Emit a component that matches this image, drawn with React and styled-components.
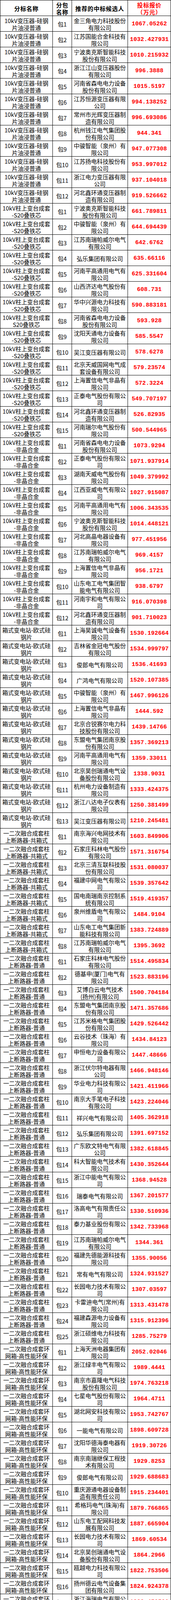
import React from 'react';
import styled, { createGlobalStyle } from 'styled-components';

const GlobalStyle = createGlobalStyle`
  html, body { margin: 0; padding: 0; background: #ffffff; }
  body { font-family: "Noto Sans CJK SC", "Noto Sans", sans-serif; color: #000; }
`;

const Table = styled.div`
  width: 437px;
  box-sizing: border-box;
  border-top: 1px solid #000;
  border-left: 1px solid #000;
`;

const Row = styled.div`
  display: grid;
  grid-template-columns: 134px 49px 143px 110px;
`;

const Cell = styled.div`
  box-sizing: border-box;
  height: 40px;
  border-right: 1px solid #000;
  border-bottom: 1px solid #000;
  display: flex;
  align-items: center;
  justify-content: center;
  text-align: center;
  padding: 3px 3px 0;
  font-size: 14.8px;
  line-height: 17.6px;
  color: ${(p) => (p.$red ? '#ff0000' : '#000')};
  font-weight: ${(p) => (p.$bold ? 700 : 400)};
  letter-spacing: ${(p) => (p.$bold ? '0.8px' : '0')};
  white-space: ${(p) => (p.$nowrap ? 'nowrap' : 'normal')};
  overflow: hidden;
`;

const Price = styled(Cell)`
  font-family: "Liberation Mono", "DejaVu Sans Mono", monospace;
  font-size: 15px;
  font-weight: 700;
  color: #ff0000;
  padding: 3px 0 0;
  letter-spacing: 0;
`;

const Lines = styled.span`
  display: block;
`;

const sections = [
  {
    name: ['10kV变压器-硅钢', '片油浸普通'],
    items: [
      ['金三角电力科技股份有限公司', '1067.05262'],
      ['江苏国能合金科技有限公司', '1032.427931'],
      ['宁波奥克斯智能科技股份有限公司', '1010.215932'],
      ['浙江江山变压器股份有限公司', '996.3888'],
      ['河南省森电电力设备股份有限公司', '1015.5197'],
      ['江苏恒源变压器有限公司', '994.138252'],
      ['常州市光辉变压器制造有限公司', '996.693086'],
      ['杭州钱江电气集团股份有限公司', '944.341'],
      ['中骏智能（泉州）有限公司', '947.077308'],
      ['江苏扬电科技股份有限公司', '953.997012'],
      ['浙江电力变压器有限公司', '937.104018'],
      ['河北鑫环通变压器制造有限公司', '919.526662'],
    ],
  },
  {
    name: ['10kV柱上变台成套', '-S20叠铁芯'],
    items: [
      ['宁波奥克斯智能科技股份有限公司', '661.789811'],
      ['中骏智能（泉州）有限公司', '644.694439'],
      ['江苏南瑞帕威尔电气有限公司', '642.6762'],
      ['弘乐集团有限公司', '635.66116'],
      ['河南平高通用电气有限公司', '625.331604'],
      ['山西济达电气股份有限公司', '608.731'],
      ['华中兴源电力科技有限公司', '590.883181'],
      ['河南省森电电力设备股份有限公司', '593.928', ['10kV柱上变台成套', 'S20叠铁芯']],
      ['沈阳天通电力设备有限公司', '585.5547'],
      ['吴江变压器有限公司', '578.6278'],
      ['北京天威国网电气成套设备有限公司', '579.23574'],
      ['上海置信电气非晶有限公司', '572.3224'],
      ['正泰电气股份有限公司', '549.707197'],
      ['河北鑫环通变压器制造有限公司', '526.82935'],
      ['河南瑞尔电气股份有限公司', '500.544965'],
    ],
  },
  {
    name: ['10kV柱上变台成套', '-非晶合金'],
    items: [
      ['河南省森电电力设备股份有限公司', '1073.9294'],
      ['正泰电气股份有限公司', '1071.937914'],
      ['湖南天威电气股份有限公司', '1049.379992'],
      ['江西亚威电气有限公司', '1027.915087'],
      ['河南平高通用电气有限公司', '1006.343535'],
      ['宁波奥克斯智能科技股份有限公司', '1014.448121'],
      ['河北高晶电器设备有限公司', '977.451956'],
      ['江苏南瑞帕威尔电气有限公司', '969.4157'],
      ['上海置信电气非晶有限公司', '956.1721'],
      ['山东电工电气集团智能电气有限公司', '938.6797'],
      ['河南宇和电气有限公司', '916.070398'],
      ['河北鑫环通变压器制造有限公司', '901.710023'],
    ],
  },
  {
    name: ['箱式变电站-欧式硅', '钢片'],
    items: [
      ['上海昊诚电气设备有限公司', '1530.192664'],
      ['吉林省金冠电气股份有限公司', '1534.999797'],
      ['俊郎电气有限公司', '1536.41693'],
      ['广鸿电气有限公司', '1520.107385'],
      ['中骏智能（泉州）有限公司', '1467.996126'],
      ['上海置信电气非晶有限公司', '1444.592'],
      ['北京合锐赛尔电力科技股份有限公司', '1439.14766'],
      ['东盟电气集团南京股份有限公司', '1357.369213'],
      ['河南平高通用电气有限公司', '1359.33011'],
      ['北京昊创瑞通电气设备股份有限公司', '1338.9031'],
      ['杭州电力设备制造有限公司', '1333.424375'],
      ['浙江八达电子仪表有限公司', '1250.381499'],
      ['吴江变压器有限公司', '1210.245481'],
    ],
  },
  {
    name: ['一二次融合成套柱', '上断路器-共箱式'],
    items: [
      ['南京海兴电网技术有限公司', '1603.849906'],
      ['石家庄科林电气股份有限公司', '1571.316754'],
      ['北京三清互联科技股份有限公司', '1531.080037'],
      ['福建中网电气有限公司', '1539.357642'],
      ['国电南瑞南京控制系统有限公司', '1519.419357'],
      ['泉州维盾电气有限公司', '1484.9104'],
      ['山东电工电气集团新能科技有限公司', '1383.724889'],
      ['江苏南瑞帕威尔电气有限公司', '1395.3692'],
    ],
  },
  {
    name: ['一二次融合成套柱', '上断路器-普通'],
    items: [
      ['石家庄科林电气股份有限公司', '1514.495834'],
      ['德基申(厦门)电气有限公司', '1523.883196'],
      ['艾博白云电气技术(扬州)有限公司', '1500.704184'],
      ['东盟电气集团南京股份有限公司', '1471.357686'],
      ['江苏米格电气集团股份有限公司', '1429.526442'],
      ['云谷技术（珠海）有限公司', '1434.84123'],
      ['申恒电力设备有限公司', '1447.48666'],
      ['浙江伏尔特电器有限公司', '1466.948146'],
      ['华业电力科技有限公司', '1421.411966'],
      ['南京大手笔电子科技有限公司', '1423.224046'],
      ['祥兴电气有限公司', '1405.362918'],
      ['弘乐集团有限公司', '1391.697152'],
      ['广东欧文特电气有限公司', '1382.618845'],
      ['科大智能电气技术有限公司', '1430.352644'],
      ['浙江中能电气有限公司', '1368.94528'],
      ['瑞泰电气有限公司', '1367.201577'],
      ['洛高电气有限责任公司', '1330.510936'],
      ['泰力基业股份有限公司', '1342.733968'],
      ['江苏南瑞帕威尔电气有限公司', '1344.361'],
      ['福建先德能源科技有限公司', '1355.90056'],
      ['常有电气有限公司', '1324.931527'],
      ['长园电力技术有限公司', '1307.03597'],
      ['卡雷迪电气(常州)有限公司', '1313.431478'],
      ['福建森源电力设备有限公司', '1315.912396'],
      ['浙江硕维电力科技有限公司', '1285.75279'],
    ],
  },
  {
    name: ['一二次融合成套环', '网箱-高性能环保'],
    items: [
      ['上海天洲电器集团有限公司', '2052.02046'],
      ['浙江绿丰电气有限公司', '1989.4441'],
      ['南京市嘉隆电气科技股份有限公司', '1974.763218'],
      ['七星电气股份有限公司', '1964.4711'],
      ['湖北网安科技有限公司', '1953.742767'],
      ['一能电气有限公司', '1898.609728'],
      ['沈阳华德海泰电器有限公司', '1919.30726'],
      ['南京南瑞继保工程技术有限公司', '1929.8253'],
      ['俊郎电气有限公司', '1929.688683'],
      ['重庆源通电器设备制造有限责任公司', '1915.234401'],
      ['希格玛电气(珠海)有限公司', '1879.766865'],
      ['山东电工配网科技发展有限公司', '1887.665904'],
      ['长园电力技术有限公司', '1869.60534'],
      ['北京昊创瑞通电气设备股份有限公司', '1864.2966'],
      ['瓯越电力科技有限公司', '1822.753506'],
      ['扬州德云电气设备集团有限公司', '1824.924378'],
      ['浙江海瑞电气有限公司', '1838.452599'],
      ['中能电气股份有限公司', '1868.909825'],
      ['湖南天威电气股份有限公司', '1838.280024'],
      ['东盟电气集团南京股份有限公司', '1786.936247'],
      ['江苏大烨智能电气股份有限公司', '1811.744614'],
      ['安徽龙波电气有限公司', '1801.205084'],
      ['福州亿力电器设备有限公司', '1793.564476'],
      ['巨邦集团有限公司', '1775.580398'],
      ['泰力基业股份有限公司', '1746.34701'],
      ['沈阳昊诚电气有限公司', '1812.444855'],
      ['一仁电力设备有限公司', '1763.356622'],
      ['北京双杰电气股份有限公司', '1745.411108'],
      ['江苏南瑞帕威尔电气有限公司', '1793.4908'],
      ['佳源科技股份有限公司', '1731.24136'],
    ],
  },
  {
    name: ['环网柜-高性能环保', '气体'],
    items: [
      ['浙江双成电气有限公司', '1078.389736'],
      ['上海天洲电器集团有限公司', '1052.389672'],
      ['北京双杰电气股份有限公司', '1030.678085'],
      ['河南平高通用电气有限公司', '1035.320916'],
      ['一能电气有限公司', '1003.824652'],
      ['重庆源通电器设备制造有限责任公司', '1012.934712'],
      ['江西伊发电力科技股份有限公司', '990.40428'],
      ['福州亿力电器设备有限公司', '983.78478'],
      ['沈阳华德海泰电器有限公司', '953.20246'],
      ['广东欧文特电气有限公司', '940.996539'],
      ['珠海沃顿电气有限公司', '946.219992'],
      ['沈阳汇鼎润达科技有限公司', '914.509'],
      ['珠海许继电气有限公司', '873.96534'],
      ['浙江海瑞电气有限公司', '886.838327'],
      ['厦门先德开关有限公司', '900.629775'],
    ],
  },
  {
    name: ['高压开关柜-高性能'],
    items: [
      ['上海大华电器设备有限公司', '779.310868'],
      ['山东电工配网科技发展有限公司', '700.330043'],
    ],
  },
  {
    name: ['端子箱'],
    items: [
      ['深圳瑞能电气设备有限公司', '135.914562'],
      ['保定钰鑫电气科技有限公司', '138.842537'],
    ],
  },
  {
    name: ['配电箱'],
    items: [
      ['东盟电气集团南京股份有限公司', '527.031963'],
      ['宁波共盛电气科技有限公司', '521.511272'],
      ['一能电气有限公司', '504.030511'],
      ['浙江浦成电气有限公司', '500.126614'],
      ['河南瑞尔电气股份有限公司', '489.661606'],
      ['广鸿电气有限公司', '473.887434'],
    ],
  },
  {
    name: ['低压电缆分支箱'],
    items: [
      ['德勒科技有限公司', '881.352992'],
      ['中电装备山东电子有限公司', '854.741149'],
      ['华拓电力装备集团有限公司', '847.813855'],
      ['鸿浩电力设备有限公司', '839.464005'],
      ['河南省三禾电气集团有限公司', '810.086943'],
      ['源洲电气有限公司', '796.643898'],
      ['一能电气有限公司', '800.27165'],
      ['上海海雄电气成套设备有限公司', '784.964331'],
      ['浙江领方电气有限公司', '783.292859'],
    ],
  },
];

const MultiLine = ({ lines }) => (
  <Lines>
    {lines.map((l, i) => (
      <React.Fragment key={i}>
        {i > 0 && <br />}
        {l}
      </React.Fragment>
    ))}
  </Lines>
);

export default function App() {
  return (
    <>
      <GlobalStyle />
      <Table>
        <Row>
          <Cell $bold $nowrap>分标名称</Cell>
          <Cell $bold $nowrap><MultiLine lines={['分包', '名称']} /></Cell>
          <Cell $bold $nowrap>推荐的中标候选人</Cell>
          <Cell $bold $red $nowrap><MultiLine lines={['投标报价', '（万元）']} /></Cell>
        </Row>
        {sections.map((s, si) =>
          s.items.map(([company, price, nameOverride], i) => (
            <Row key={`${si}-${i}`}>
              <Cell $nowrap><MultiLine lines={nameOverride || s.name} /></Cell>
              <Cell $nowrap>包{i + 1}</Cell>
              <Cell>{company}</Cell>
              <Price>{price}</Price>
            </Row>
          ))
        )}
      </Table>
    </>
  );
}
